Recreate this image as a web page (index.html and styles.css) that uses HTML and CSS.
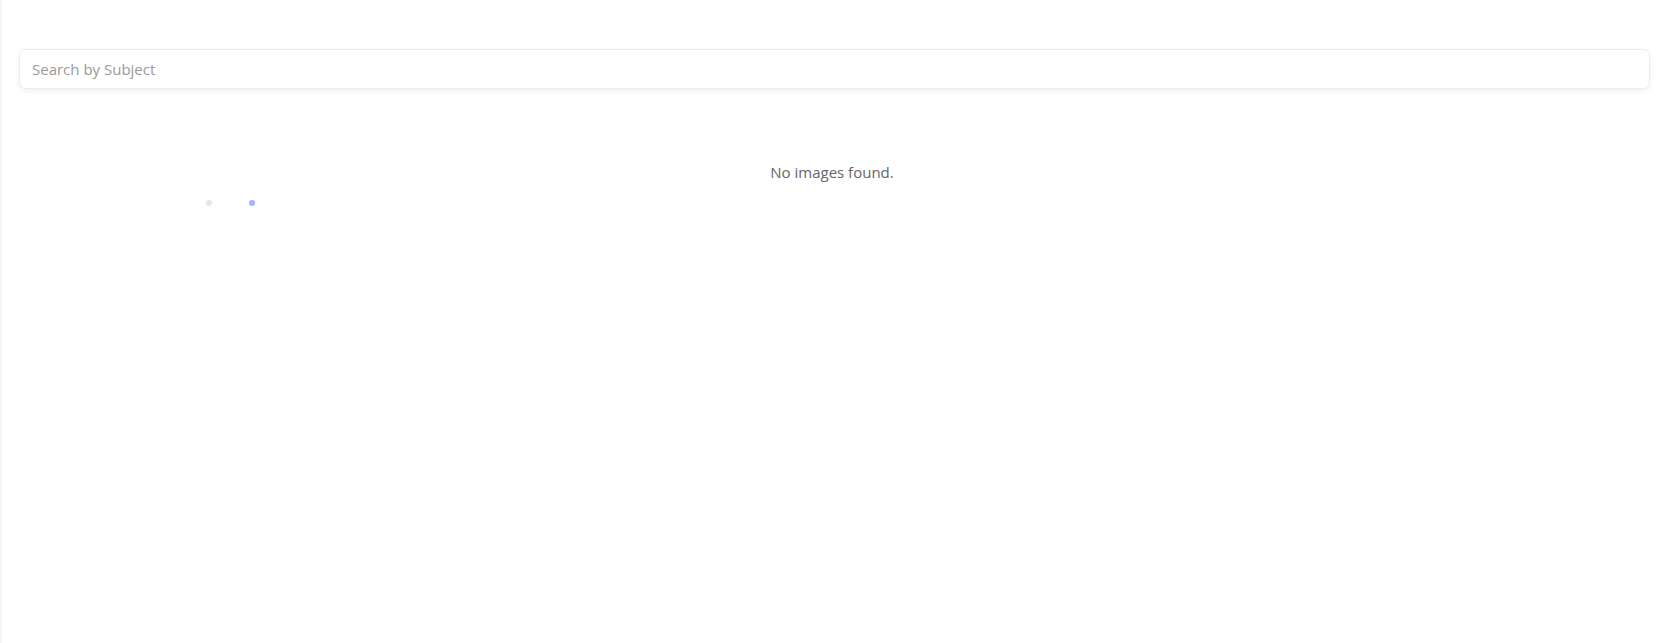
FILE: index.html
```html
<!DOCTYPE html>
<html>
<head>
<meta charset="utf-8">
<link rel="stylesheet" href="styles.css">
</head>
<body>
<div class="page">
  <div class="search-bar">
    <input class="search-input" type="text" placeholder="Search by Subject">
  </div>
  <div class="content">
    <p class="empty">No images found.</p>
    <div class="dots">
      <span class="dot dot-gray"></span>
      <span class="dot dot-blue"></span>
    </div>
  </div>
</div>
</body>
</html>
```
FILE: styles.css
```css
html, body {
  margin: 0;
  padding: 0;
  background: #ffffff;
  font-family: "Open Sans", "Liberation Sans", sans-serif;
}
.page {
  min-height: 643px;
  border-left: 2px solid #f6f6f6;
  box-sizing: border-box;
}
.search-bar {
  padding: 49px 12px 0 17px;
}
.search-input {
  display: block;
  width: 100%;
  box-sizing: border-box;
  height: 40px;
  padding: 0 12px;
  border: 1px solid #ececec;
  border-radius: 7px;
  box-shadow: 0 2px 6px rgba(0,0,0,0.06);
  font-family: inherit;
  font-size: 15px;
  color: #333;
  outline: none;
  background: #fff;
}
.search-input::placeholder {
  color: #9a9a9a;
}
.content {
  padding-top: 72px;
}
.empty {
  margin: 0;
  text-align: center;
  font-size: 15px;
  color: #666;
  line-height: 22px;
}
.dots {
  display: flex;
  gap: 37px;
  padding-left: 204px;
  margin-top: 17px;
}
.dot {
  width: 6px;
  height: 6px;
  border-radius: 50%;
}
.dot-gray { background: #e4e6e8; }
.dot-blue { background: #9bb8ff; }
```
